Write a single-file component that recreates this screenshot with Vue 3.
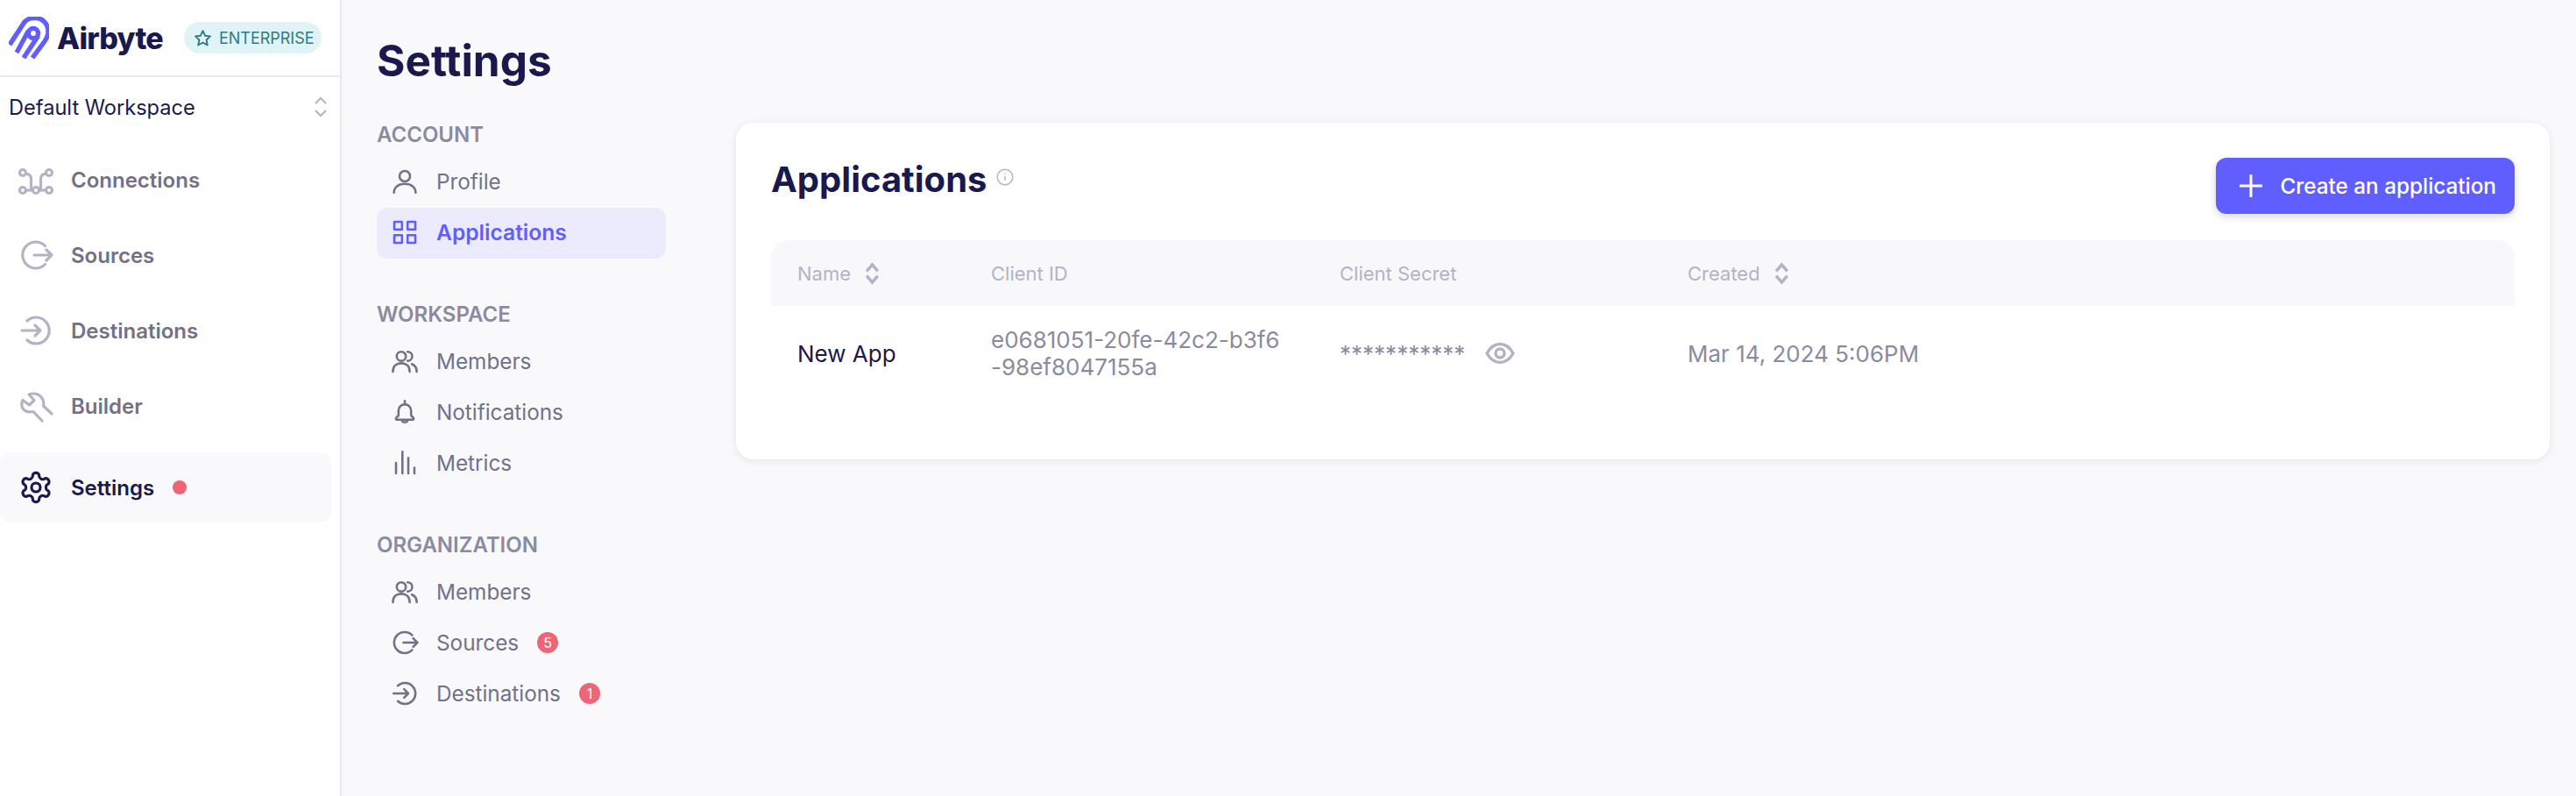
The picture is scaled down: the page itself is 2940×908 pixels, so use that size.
<template>
  <div class="app">
    <aside class="sidebar">
      <div class="brand">
        <svg class="logo" viewBox="0 0 46 48" fill="none" stroke="#615eff" stroke-width="5.400">
          <path d="M1 32 L18 6 C23 1 27 1.500 31 1.500 C39 1.500 45 9 45 17 C45 21 43 25 41 28 L27 47" />
          <circle cx="28" cy="19" r="5.600" />
          <path d="M33.500 22 L17 47" />
          <path d="M9 41 L22.500 16" />
        </svg>
        <span class="brand-name">Airbyte</span>
        <span class="pill">
          <svg class="pill-star" viewBox="0 0 24 24" fill="none" stroke="currentColor" stroke-width="2.200" stroke-linejoin="round">
            <path d="M12 2.500l2.900 6.300 6.800.8-5 4.700 1.300 6.800-6-3.400-6 3.400 1.300-6.800-5-4.700 6.800-.8z" />
          </svg>
          ENTERPRISE
        </span>
      </div>
      <div class="workspace">
        <span>Default Workspace</span>
        <svg class="workspace-chevrons" viewBox="0 0 16 24" fill="none" stroke="currentColor" stroke-width="2">
          <path d="M2 8l6-6 6 6M2 16l6 6 6-6" />
        </svg>
      </div>
      <nav class="main-nav">
        <a v-for="item in mainNav" :key="item.label" class="main-link" :class="{ active: item.active }">
          <svg class="main-icon" :viewBox="icons[item.icon].box" fill="none" stroke="currentColor" :stroke-width="icons[item.icon].main" stroke-linecap="round" stroke-linejoin="round">
            <path v-for="d in icons[item.icon].paths" :key="d" :d="d" />
          </svg>
          <span>{{ item.label }}</span>
          <i v-if="item.active" class="dot"></i>
        </a>
      </nav>
    </aside>

    <main class="page">
      <div class="settings-col">
        <h1>Settings</h1>
        <section v-for="group in groups" :key="group.title" class="group">
          <h5>{{ group.title }}</h5>
          <a v-for="item in group.items" :key="item.label" class="sub-link" :class="{ selected: item.selected }">
            <span class="sub-icon">
              <svg viewBox="0 0 40 40" fill="none" stroke="currentColor" stroke-width="3.200" stroke-linecap="round" stroke-linejoin="round">
                <path v-for="d in icons[item.icon].paths" :key="d" :d="d" />
              </svg>
            </span>
            <span>{{ item.label }}</span>
            <b v-if="item.count" class="count">{{ item.count }}</b>
          </a>
        </section>
      </div>

      <div class="card">
        <div class="card-head">
          <div class="card-title">
            <h2>Applications</h2>
            <svg class="info" viewBox="0 0 20 20" fill="none" stroke="currentColor" stroke-width="1.500">
              <circle cx="10" cy="10" r="8.800" />
              <path d="M10 9v4.800M10 5.800v1" />
            </svg>
          </div>
          <button class="create">
            <svg viewBox="0 0 26 26" fill="none" stroke="currentColor" stroke-width="3" stroke-linecap="round">
              <path d="M13 1v24M1 13h24" />
            </svg>
            Create an application
          </button>
        </div>
        <table>
          <thead>
            <tr>
              <th v-for="col in columns" :key="col.label">
                <span class="th-inner">
                  {{ col.label }}
                  <svg v-if="col.sort" viewBox="0 0 16 24" fill="none" stroke="currentColor" stroke-width="3.200">
                    <path d="M2 9.500l6-7 6 7M2 14.500l6 7 6-7" />
                  </svg>
                </span>
              </th>
            </tr>
          </thead>
          <tbody>
            <tr>
              <td class="app-name">New App</td>
              <td class="client-id">e0681051-20fe-42c2-b3f6-98ef8047155a</td>
              <td>
                <span class="secret">
                  ***********
                  <svg viewBox="0 0 34 26" fill="none" stroke="#b3b3c6" stroke-width="3.400">
                    <path d="M2 13C6 6 11 2.500 17 2.500S28 6 32 13c-4 7-9 10.500-15 10.500S6 20 2 13z" />
                    <circle cx="17" cy="13" r="5" />
                  </svg>
                </span>
              </td>
              <td class="created">Mar 14, 2024 5:06PM</td>
            </tr>
          </tbody>
        </table>
      </div>
    </main>
  </div>
</template>

<script setup>
const ring = (cx, cy, r) => `M${cx - r} ${cy}a${r} ${r} 0 1 0 ${r * 2} 0a${r} ${r} 0 1 0 ${-r * 2} 0`;

const gear =
  'M12.220 2h-.440a2 2 0 0 0-2 2v.180a2 2 0 0 1-1 1.730l-.430.250a2 2 0 0 1-2 0l-.150-.080a2 2 0 0 0-2.730.730l-.220.380a2 2 0 0 0 .730 2.730l.150.100a2 2 0 0 1 1 1.720v.510a2 2 0 0 1-1 1.740l-.150.090a2 2 0 0 0-.730 2.730l.220.380a2 2 0 0 0 2.730.730l.150-.080a2 2 0 0 1 2 0l.430.250a2 2 0 0 1 1 1.730V20a2 2 0 0 0 2 2h.440a2 2 0 0 0 2-2v-.180a2 2 0 0 1 1-1.730l.430-.250a2 2 0 0 1 2 0l.150.080a2 2 0 0 0 2.730-.730l.220-.390a2 2 0 0 0-.730-2.730l-.150-.080a2 2 0 0 1-1-1.740v-.500a2 2 0 0 1 1-1.740l.150-.090a2 2 0 0 0 .730-2.730l-.220-.380a2 2 0 0 0-2.730-.730l-.150.080a2 2 0 0 1-2 0l-.430-.250a2 2 0 0 1-1-1.730V4a2 2 0 0 0-2-2z';

const icons = {
  connections: {
    box: '0 0 40 40',
    main: 3.2,
    paths: [
      ring(5, 12, 3.5),
      ring(35, 12, 3.5),
      ring(5, 32, 3.5),
      ring(20, 32, 3.5),
      ring(35, 32, 3.5),
      'M8.500 32h8M23.500 32h8',
      'M8.500 13c4 .500 6 2 6 6v13M31.500 13c-4 .500-6 2-6 6v13',
    ],
  },
  sources: {
    box: '0 0 40 40',
    main: 3.2,
    paths: ['M30.500 9.500a15 15 0 1 0 0 21', 'M18 20h20M32 14l6 6-6 6'],
  },
  destinations: {
    box: '0 0 40 40',
    main: 3.2,
    paths: ['M10 9a15 15 0 1 1 0 22', 'M4 20h21M19 14l6 6-6 6'],
  },
  builder: {
    box: '0 0 40 40',
    main: 3.2,
    paths: ['M38 29L28.500 20C30 14 26 6 17 6 15 6 13.500 6.300 12 7L18 13.500 12.500 19 5 13.500C4 15 3.800 17 3.800 18.500 3.800 25 10 28 17 26.500L27 37'],
  },
  settings: {
    box: '0 0 24 24',
    main: 1.9,
    paths: [gear, ring(12, 12, 3)],
  },
  profile: {
    box: '0 0 40 40',
    paths: [ring(20, 12.5, 7.5), 'M4.500 36C4.500 28 11 23.500 20 23.500S35.500 28 35.500 36'],
  },
  applications: {
    box: '0 0 40 40',
    paths: ['M5 5h11v11H5zM24 5h11v11H24zM5 24h11v11H5zM24 24h11v11H24z'],
  },
  members: {
    box: '0 0 40 40',
    paths: [ring(15, 13, 6.5), 'M3 35C3 27 8 23 15 23S27 27 27 35', 'M24 6.500a6.500 6.500 0 0 1 0 13', 'M30 24c4 1.500 7 5 7 11'],
  },
  notifications: {
    box: '0 0 40 40',
    paths: ['M20 4v5', 'M11 25v-7c0-5 4-9 9-9s9 4 9 9v7l3 3c1 1 1 3-1 3H9c-2 0-2-2-1-3z', 'M16 32c1 3.500 7 3.500 8 0'],
  },
  metrics: {
    box: '0 0 40 40',
    paths: ['M7.500 35V20M16.600 35V4M25 35V13M33.700 35v-8'],
  },
};

const mainNav = [
  { label: 'Connections', icon: 'connections' },
  { label: 'Sources', icon: 'sources' },
  { label: 'Destinations', icon: 'destinations' },
  { label: 'Builder', icon: 'builder' },
  { label: 'Settings', icon: 'settings', active: true },
];

const groups = [
  {
    title: 'ACCOUNT',
    items: [
      { label: 'Profile', icon: 'profile' },
      { label: 'Applications', icon: 'applications', selected: true },
    ],
  },
  {
    title: 'WORKSPACE',
    items: [
      { label: 'Members', icon: 'members' },
      { label: 'Notifications', icon: 'notifications' },
      { label: 'Metrics', icon: 'metrics' },
    ],
  },
  {
    title: 'ORGANIZATION',
    items: [
      { label: 'Members', icon: 'members' },
      { label: 'Sources', icon: 'sources', count: 5 },
      { label: 'Destinations', icon: 'destinations', count: 1 },
    ],
  },
];

const columns = [
  { label: 'Name', sort: true },
  { label: 'Client ID' },
  { label: 'Client Secret' },
  { label: 'Created', sort: true },
];
</script>

<style>
body {
  background: #f9f9fc;
}
</style>

<style scoped>
.app {
  display: flex;
  height: 908px;
  overflow: hidden;
  background: #f9f9fc;
  color: #1a194d;
  font-family: Inter, "Liberation Sans", sans-serif;
}

.sidebar {
  width: 390px;
  flex-shrink: 0;
  box-sizing: border-box;
  background: #fff;
  border-right: 2px solid #e8e8ed;
}

.brand {
  height: 88px;
  box-sizing: border-box;
  display: flex;
  align-items: center;
  padding: 0 0 0 10px;
  border-bottom: 2px solid #e8e8ed;
}

.logo {
  width: 46px;
  height: 48px;
}

.brand-name {
  margin-left: 9px;
  font-size: 34px;
  font-weight: 800;
  letter-spacing: -0.8px;
}

.pill {
  display: flex;
  align-items: center;
  gap: 8px;
  height: 36px;
  margin-left: 24px;
  padding: 0 8px 0 11px;
  border-radius: 18px;
  background: #e0f4f7;
  color: #2e7b85;
  font-size: 18px;
}

.pill-star {
  width: 21px;
  height: 21px;
}

.workspace {
  display: flex;
  align-items: center;
  justify-content: space-between;
  height: 68px;
  padding: 0 14px 0 10px;
  font-size: 23.6px;
}

.workspace-chevrons {
  width: 16px;
  height: 24px;
  color: #b3b3c6;
}

.main-nav {
  display: flex;
  flex-direction: column;
  padding-top: 6px;
}

.main-link {
  display: flex;
  align-items: center;
  height: 86px;
  padding-left: 21px;
  margin-right: 10px;
  color: #717189;
  font-size: 24px;
  font-weight: 600;
}

.main-link .main-icon {
  width: 40px;
  height: 40px;
  margin-right: 20px;
  color: #b3b3c6;
}

.main-link.active {
  height: 80px;
  margin-top: 10px;
  border-radius: 12px;
  background: #f9f9fc;
  color: #1a194d;
}

.main-link.active .main-icon {
  color: #1a194d;
}

.dot {
  width: 16px;
  height: 16px;
  margin-left: 21px;
  border-radius: 50%;
  background: #ee6577;
}

.page {
  flex: 1;
  display: flex;
  padding: 0 30px 0 40px;
  min-width: 0;
}

.settings-col {
  width: 330px;
  flex-shrink: 0;
  margin-right: 80px;
}

h1 {
  height: 127px;
  margin: 0;
  padding-top: 39px;
  box-sizing: border-box;
  font-size: 49.5px;
  line-height: 60px;
  font-weight: 700;
}

.group {
  margin-bottom: 37px;
}

h5 {
  display: flex;
  align-items: center;
  height: 52px;
  margin: 0;
  color: #8b8ba0;
  font-size: 24px;
  font-weight: 600;
}

.sub-link {
  display: flex;
  align-items: center;
  box-sizing: border-box;
  height: 58px;
  padding: 0 0 2px 16px;
  border-radius: 12px;
  color: #717189;
  font-size: 24.3px;
}

.sub-icon {
  display: flex;
  width: 32px;
  height: 32px;
  margin-right: 20px;
}

.sub-link.selected {
  background: #ebebfd;
  color: #615eff;
  font-weight: 600;
  font-size: 24.6px;
}

.count {
  display: flex;
  align-items: center;
  justify-content: center;
  width: 24px;
  height: 24px;
  margin-left: 21px;
  border-radius: 50%;
  background: #ee6577;
  color: #fff;
  font-size: 16px;
  font-weight: 400;
}

.card {
  flex: 1;
  align-self: flex-start;
  box-sizing: border-box;
  height: 384px;
  margin-top: 140px;
  padding: 40px;
  border-radius: 20px;
  background: #fff;
  box-shadow: 0 2px 8px rgba(26, 25, 77, 0.1);
}

.card-head {
  display: flex;
  justify-content: space-between;
  height: 94px;
}

.card-title {
  display: flex;
  align-items: flex-start;
  gap: 11px;
}

h2 {
  margin: 0;
  font-size: 40px;
  line-height: 50px;
  font-weight: 700;
}

.info {
  width: 20px;
  height: 20px;
  margin-top: 12px;
  color: #b3b3c6;
}

.create {
  display: flex;
  align-items: center;
  height: 64px;
  padding: 0 21px 0 27px;
  border: 0;
  border-radius: 12px;
  background: #615eff;
  color: #fff;
  font: 500 24.3px Inter, sans-serif;
  box-shadow: 0 3px 8px rgba(26, 25, 77, 0.18);
}

.create svg {
  width: 26px;
  height: 26px;
  margin-right: 20px;
}

table {
  width: 100%;
  table-layout: fixed;
  border-collapse: collapse;
}

th:nth-child(1) {
  width: 221px;
}

th:nth-child(2) {
  width: 398px;
}

th:nth-child(3) {
  width: 397px;
}

thead tr {
  height: 75px;
  background: #f8f8fa;
}

th:first-child {
  border-top-left-radius: 20px;
}

th:last-child {
  border-top-right-radius: 20px;
}

th {
  box-sizing: border-box;
  padding: 0 0 0 30px;
  text-align: left;
  color: #b3b3c6;
  font-size: 22px;
  font-weight: 400;
}

.th-inner {
  display: flex;
  align-items: center;
  gap: 16px;
}

.th-inner svg {
  width: 17px;
  height: 26px;
}

tbody tr {
  height: 108px;
}

td {
  box-sizing: border-box;
  padding: 0 30px;
  color: #8b8ba0;
  font-size: 26px;
}

td.app-name {
  color: #1a194d;
}

td.client-id {
  line-height: 31px;
  line-break: anywhere;
}

.secret {
  display: flex;
  align-items: center;
  gap: 23px;
}

.secret svg {
  width: 34px;
  height: 26px;
}
</style>
